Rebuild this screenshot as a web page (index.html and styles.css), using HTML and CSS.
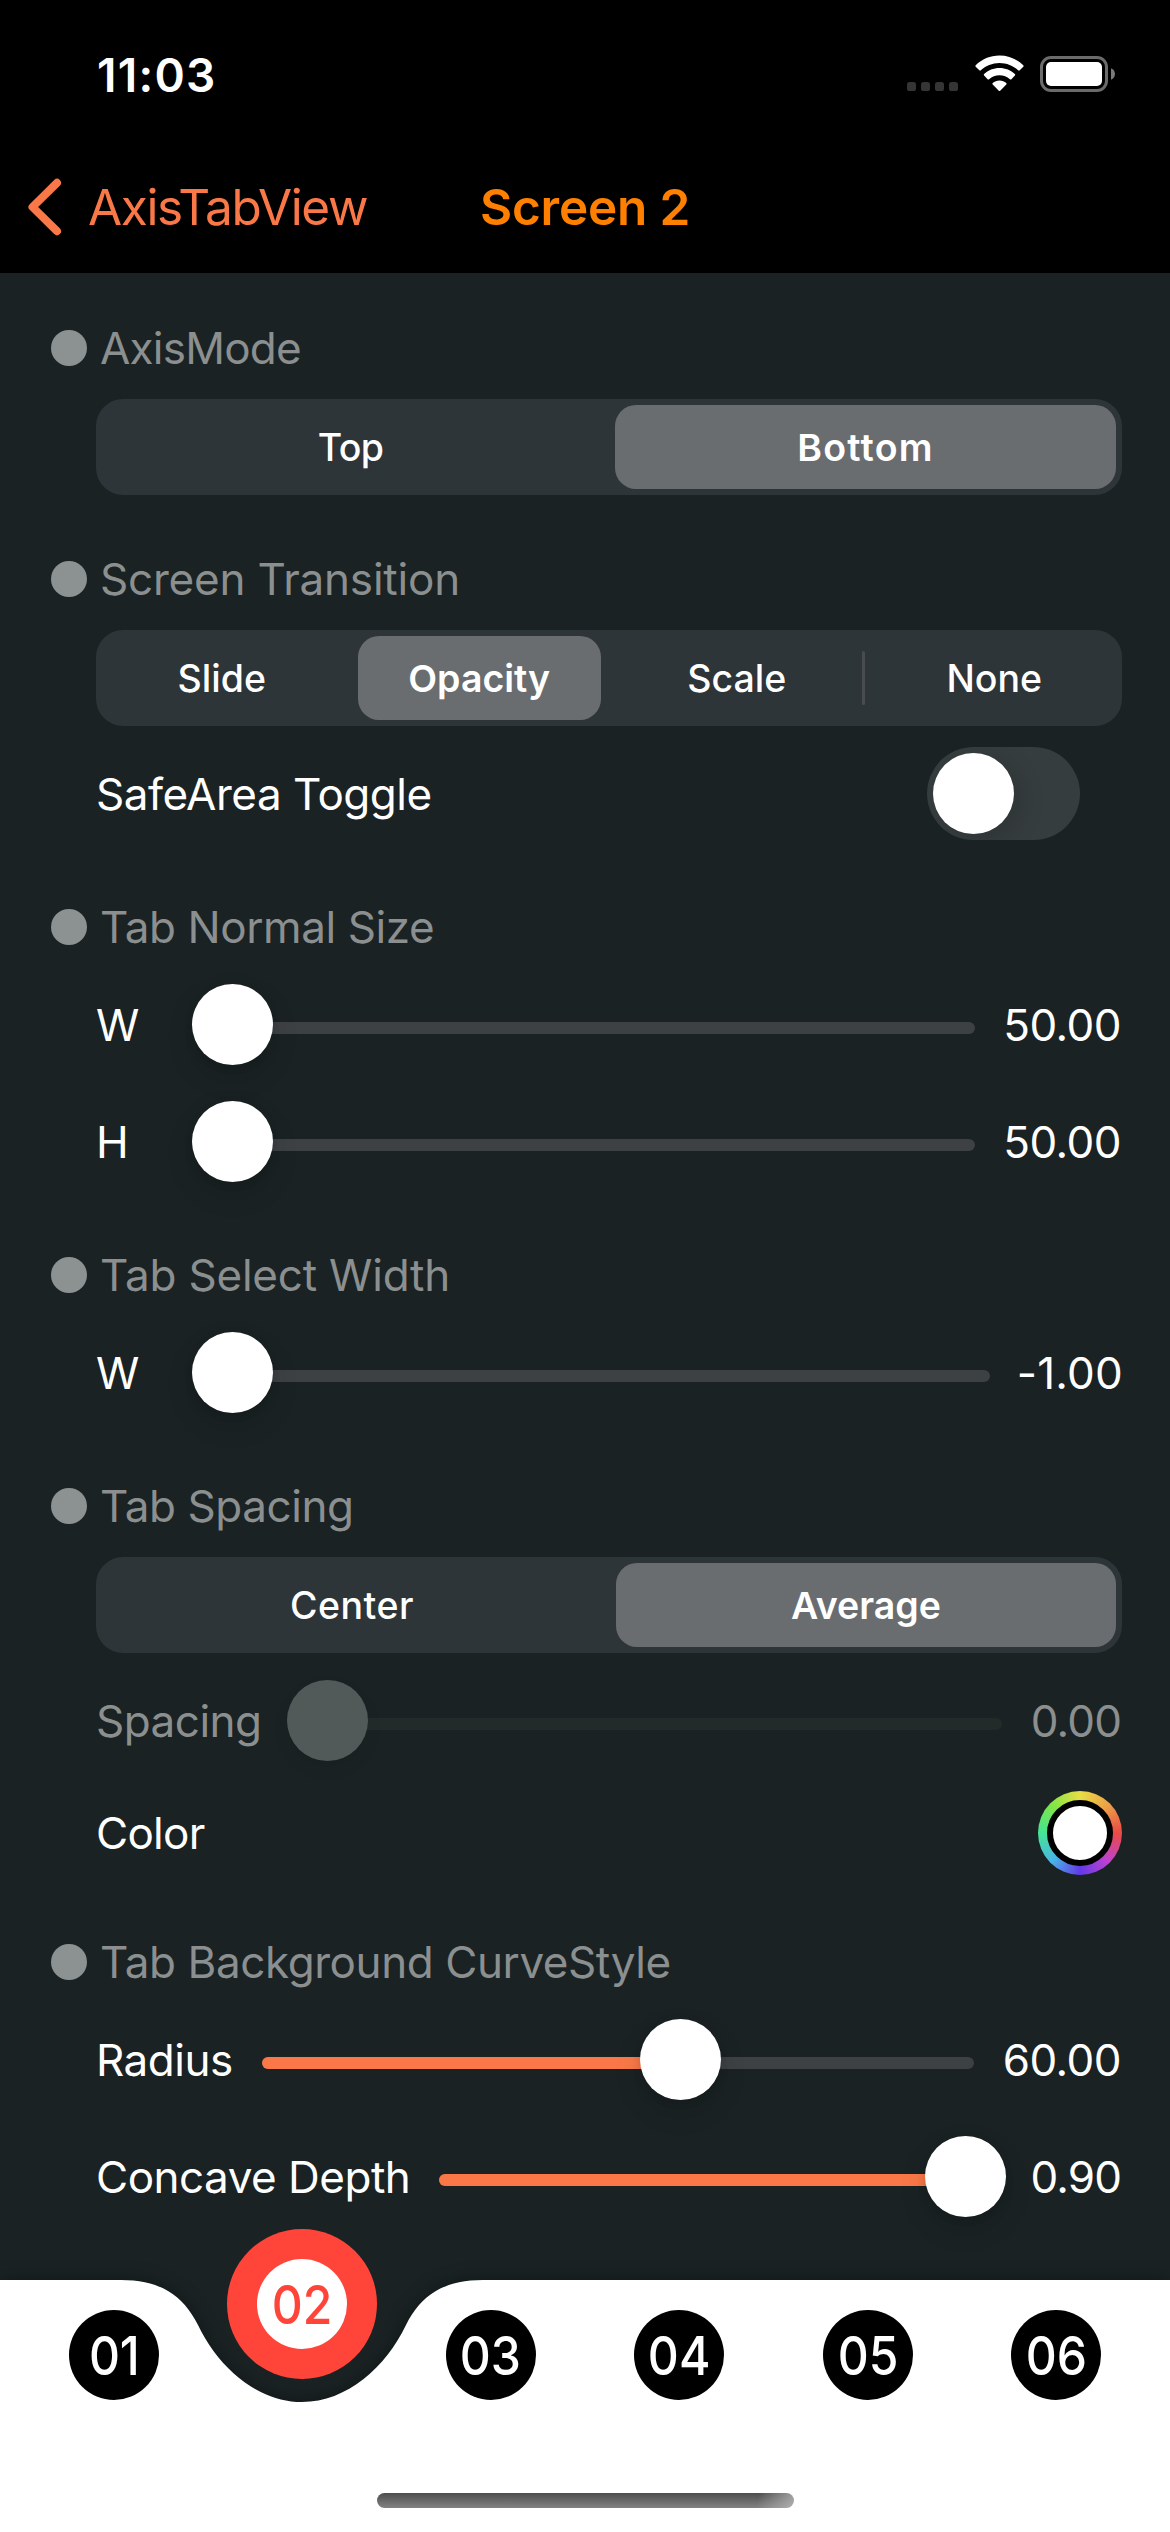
FILE: index.html
```
<!DOCTYPE html>
<html lang="en">
<head>
<meta charset="utf-8">
<title>Screen 2</title>
<link rel="stylesheet" href="styles.css">
</head>
<body>
<div class="screen">
  <header class="header">
    <div class="status">
      <span class="time">11:03</span>
      <div class="status-icons">
        <svg class="cell" width="51" height="9" viewBox="0 0 51 9"><g fill="#353535"><rect width="9" height="9" rx="2.6"/><rect x="14" width="9" height="9" rx="2.6"/><rect x="28" width="9" height="9" rx="2.6"/><rect x="42" width="9" height="9" rx="2.6"/></g></svg>
        <svg class="wifi" width="49" height="37" viewBox="0 0 49 37" fill="#fff">
          <path d="M24.5 0.5C15.2 0.5 6.8 4.2 0.7 10.2Q0 11 0.7 11.7L4.3 15.3Q5 16 5.8 15.3C10.7 10.7 17.3 7.9 24.5 7.9S38.3 10.7 43.2 15.3Q44 16 44.7 15.3L48.3 11.7Q49 11 48.3 10.2C42.2 4.2 33.8 0.5 24.5 0.5Z"/>
          <path d="M24.5 13C18.5 13 13.1 15.3 9.1 19.1Q8.3 19.9 9.1 20.6L12.6 24.2Q13.3 24.9 14.1 24.2C16.9 21.7 20.5 20.2 24.5 20.2S32.1 21.7 34.9 24.2Q35.7 24.9 36.4 24.2L39.9 20.6Q40.7 19.9 39.9 19.1C35.9 15.3 30.5 13 24.5 13Z"/>
          <path d="M24.5 25.4C21.9 25.4 19.5 26.4 17.7 28Q17 28.7 17.7 29.4L23.8 35.7Q24.5 36.4 25.2 35.7L31.3 29.4Q32 28.7 31.3 28C29.5 26.4 27.1 25.4 24.5 25.4Z"/>
        </svg>
        <svg class="battery" width="75" height="36" viewBox="0 0 75 36">
          <rect x="1.5" y="1.5" width="65" height="33" rx="9.5" fill="none" stroke="#6b6b6b" stroke-width="3"/>
          <rect x="6" y="6" width="56" height="24" rx="5" fill="#fff"/>
          <path d="M71 12.3C73.5 13.2 75 15.5 75 18S73.5 22.8 71 23.7Z" fill="#7a7a7a"/>
        </svg>
      </div>
    </div>
    <nav class="nav">
      <div class="back">
        <svg width="35" height="58" viewBox="0 0 35 58" fill="none" stroke="#fa7848" stroke-width="8" stroke-linecap="round" stroke-linejoin="round"><path d="M30 4.8L5.500 29L30 53.200"/></svg>
        <span>AxisTabView</span>
      </div>
      <h1 class="title">Screen 2</h1>
    </nav>
  </header>

  <main class="content">
    <section class="section">
      <h2 class="heading heading-tight">AxisMode</h2>
      <div class="segments">
        <div class="segment segment-top">Top</div>
        <div class="segment selected segment-bottom">Bottom</div>
      </div>
    </section>

    <section class="section">
      <h2 class="heading heading-loose">Screen Transition</h2>
      <div class="segments">
        <div class="segment">Slide</div>
        <div class="segment selected">Opacity</div>
        <div class="segment">Scale</div>
        <div class="segment divided">None</div>
      </div>
      <div class="row">
        <span class="label">SafeArea Toggle</span>
        <div class="toggle"><div class="toggle-knob"></div></div>
      </div>
    </section>

    <section class="section">
      <h2 class="heading">Tab Normal Size</h2>
      <div class="row">
        <span class="label letter">W</span>
        <div class="slider"><div class="knob"></div></div>
        <span class="value">50.00</span>
      </div>
      <div class="row">
        <span class="label letter">H</span>
        <div class="slider"><div class="knob"></div></div>
        <span class="value">50.00</span>
      </div>
    </section>

    <section class="section">
      <h2 class="heading heading-loose">Tab Select Width</h2>
      <div class="row">
        <span class="label letter">W</span>
        <div class="slider"><div class="knob"></div></div>
        <span class="value value-minus">-1.00</span>
      </div>
    </section>

    <section class="section">
      <h2 class="heading">Tab Spacing</h2>
      <div class="segments">
        <div class="segment segment-center">Center</div>
        <div class="segment selected">Average</div>
      </div>
      <div class="row disabled">
        <span class="label label-spacing">Spacing</span>
        <div class="slider"><div class="knob"></div></div>
        <span class="value value-short">0.00</span>
      </div>
      <div class="row color-row">
        <span class="label label-color">Color</span>
        <div class="color-well"><div class="color-swatch"></div></div>
      </div>
    </section>

    <section class="section">
      <h2 class="heading">Tab Background CurveStyle</h2>
      <div class="row">
        <span class="label label-radius">Radius</span>
        <div class="slider"><div class="fill" style="width: 58.8%"></div><div class="knob" style="left: 378px"></div></div>
        <span class="value value-sixty">60.00</span>
      </div>
      <div class="row">
        <span class="label label-depth">Concave Depth</span>
        <div class="slider"><div class="fill" style="width: 94%"></div><div class="knob" style="left: 486px"></div></div>
        <span class="value value-short">0.90</span>
      </div>
    </section>
  </main>

  <footer class="tabbar">
    <svg class="tabbar-shape" width="1170" height="252" viewBox="0 0 1170 252"><path fill="#fff" d="M0 0H121C160 0 183 15 198 45C218 87 257 122 302 122C347 122 386 87 406 45C421 15 444 0 483 0H1170V252H0Z"/></svg>
    <div class="tabs">
      <div class="tab"><div class="badge"><span class="one">01</span></div></div>
      <div class="tab active"><div class="halo"><div class="badge"><span>02</span></div></div></div>
      <div class="tab"><div class="badge"><span>03</span></div></div>
      <div class="tab"><div class="badge"><span>04</span></div></div>
      <div class="tab"><div class="badge"><span>05</span></div></div>
      <div class="tab"><div class="badge"><span>06</span></div></div>
    </div>
    <div class="home-indicator"></div>
  </footer>
</div>
</body>
</html>
```
FILE: styles.css
```
* { box-sizing: border-box; }

body {
  margin: 0;
  background: #1a2223;
  color: #fff;
  font-family: Inter, "Liberation Sans", sans-serif;
  -webkit-font-smoothing: antialiased;
}

h1, h2 { margin: 0; font-weight: 400; }

svg { display: block; flex: none; }

.screen {
  width: 1170px;
  height: 2532px;
  display: flex;
  flex-direction: column;
  overflow: hidden;
  background: #1a2223;
}

/* Header */
.header { height: 273px; flex: none; background: #000; }

.status {
  height: 141px;
  padding: 8px 55px 0 97px;
  display: flex;
  align-items: center;
  justify-content: space-between;
}

.time { font-size: 46px; font-weight: 600; letter-spacing: 1.27px; line-height: 56px; }

.status-icons { display: flex; align-items: center; height: 38px; }
.cell { margin: 23px 17px 0 0; }
.wifi { margin: -2px 16px 0 0; }
.battery { margin-top: -1px; }

.nav {
  height: 132px;
  display: grid;
  grid-template-columns: 1fr auto 1fr;
  align-items: center;
}

.back {
  display: flex;
  align-items: center;
  gap: 26px;
  padding-left: 27px;
  color: #fa7848;
  font-size: 49.5px;
  letter-spacing: -1.37px;
  white-space: nowrap;
}

.title {
  color: #ff8000;
  font-size: 49.5px;
  font-weight: 600;
  letter-spacing: -0.2px;
}

/* Settings list */
.content {
  flex: 1;
  min-height: 0;
  padding: 48px 48px 0 51px;
  display: flex;
  flex-direction: column;
  gap: 60px;
}

.section { display: flex; flex-direction: column; gap: 24px; }

.heading {
  display: flex;
  align-items: center;
  gap: 13px;
  height: 54px;
  color: #8b8f8f;
  font-size: 44px;
  letter-spacing: -0.42px;
  white-space: nowrap;
}
.heading::before {
  content: "";
  width: 36px;
  height: 36px;
  border-radius: 50%;
  background: #8c9191;
}
.heading-tight { letter-spacing: -0.76px; }
.heading-loose { letter-spacing: -0.2px; }

.segments {
  display: flex;
  gap: 14px;
  height: 96px;
  margin: 0 0 -3px 45px;
  padding: 6px 6px 6px 4px;
  border-radius: 27px;
  background: #2e3538;
}

.segment {
  flex: 1 1 0;
  display: flex;
  align-items: center;
  justify-content: center;
  border-radius: 21px;
  font-size: 37.5px;
  font-weight: 500;
}
.segment.selected { background: #696d70; font-weight: 600; }
.segment-top { letter-spacing: -0.6px; }
.segment-bottom { letter-spacing: 1.2px; }
.segment-center { letter-spacing: 0.5px; padding-left: 2px; }

.divided { position: relative; }
.divided::before {
  content: "";
  position: absolute;
  left: -11px;
  top: 15px;
  width: 3px;
  height: 54px;
  border-radius: 2px;
  background: #484b4f;
}

.row {
  display: flex;
  align-items: center;
  height: 93px;
  margin-left: 45px;
}

.label { flex: none; font-size: 44px; letter-spacing: -0.5px; white-space: nowrap; }
.letter { width: 96px; }
.label-spacing { width: 191px; }
.label-color { letter-spacing: -0.7px; }
.label-radius { width: 166px; }
.label-depth { width: 343px; }

.value {
  flex: none;
  width: 147px;
  padding-right: 1px;
  text-align: right;
  font-size: 44px;
  letter-spacing: -0.55px;
}
.value-minus { width: 133px; padding-right: 0; margin-right: -1px; letter-spacing: 0.2px; }
.value-short { width: 120px; letter-spacing: -0.89px; }
.value-sixty { width: 148px; }

.slider {
  position: relative;
  flex: 1;
  height: 12px;
  margin-top: 7px;
  border-radius: 6px;
  background: #3d4144;
}
.fill { height: 12px; border-radius: 6px; background: #fa7848; }
.knob {
  position: absolute;
  left: 0;
  top: -38px;
  width: 81px;
  height: 81px;
  border-radius: 50%;
  background: #fff;
  box-shadow: 0 12px 28px rgba(0, 0, 0, 0.13), 0 2px 8px rgba(0, 0, 0, 0.12);
}

.disabled { color: #8b8f8f; }
.disabled .slider { background: #222a2a; }
.disabled .knob { background: #525a59; box-shadow: 0 8px 18px rgba(0, 0, 0, 0.06); }

.toggle {
  width: 153px;
  height: 93px;
  margin: 0 42px 0 auto;
  padding: 6px;
  border-radius: 47px;
  background: #363d3f;
  overflow: hidden;
}
.toggle-knob {
  width: 81px;
  height: 81px;
  border-radius: 50%;
  background: #fff;
  box-shadow: 8px 6px 24px rgba(0, 0, 0, 0.14);
}

.color-row { height: 84px; }
.color-well {
  display: grid;
  place-items: center;
  width: 84px;
  height: 84px;
  margin-left: auto;
  border-radius: 50%;
  background: conic-gradient(#e9de45, #eda047 45deg, #ea4a45 90deg, #bf42cf 135deg, #6339e8 180deg, #49b5e8 225deg, #45e595 270deg, #80e545 315deg, #e9de45);
}
.color-swatch {
  width: 66px;
  height: 66px;
  border: 6px solid #000;
  border-radius: 50%;
  background: #fff;
}

/* Tab bar */
.tabbar {
  position: relative;
  flex: none;
  height: 252px;
  display: flex;
  flex-direction: column;
  align-items: center;
}
.tabbar-shape {
  position: absolute;
  inset: 0;
  overflow: visible;
  filter: drop-shadow(0 0 9px rgba(0, 0, 0, 0.35));
}
.tabs {
  position: relative;
  display: flex;
  width: 100%;
  height: 150px;
  padding: 0 19.5px;
}
.tab { flex: 1; display: flex; align-items: center; justify-content: center; }
.active { align-items: flex-start; }
.halo {
  display: grid;
  place-items: center;
  width: 150px;
  height: 150px;
  margin-top: -51px;
  border-radius: 50%;
  background: #ff453a;
}
.badge {
  display: grid;
  place-items: center;
  width: 90px;
  height: 90px;
  border-radius: 50%;
  background: #000;
  font-size: 54px;
  font-weight: 500;
}
.badge span { transform: scaleX(0.89); }
.badge .one { letter-spacing: -0.5px; }
.active .badge { background: #fff; color: #ff453a; }

.home-indicator {
  position: relative;
  width: 417px;
  height: 15px;
  margin-top: 63px;
  border-radius: 8px;
  background:
    linear-gradient(100deg, transparent 91%, rgba(190, 190, 190, 0.75)),
    linear-gradient(#4e4e4e, #828282);
}
```
